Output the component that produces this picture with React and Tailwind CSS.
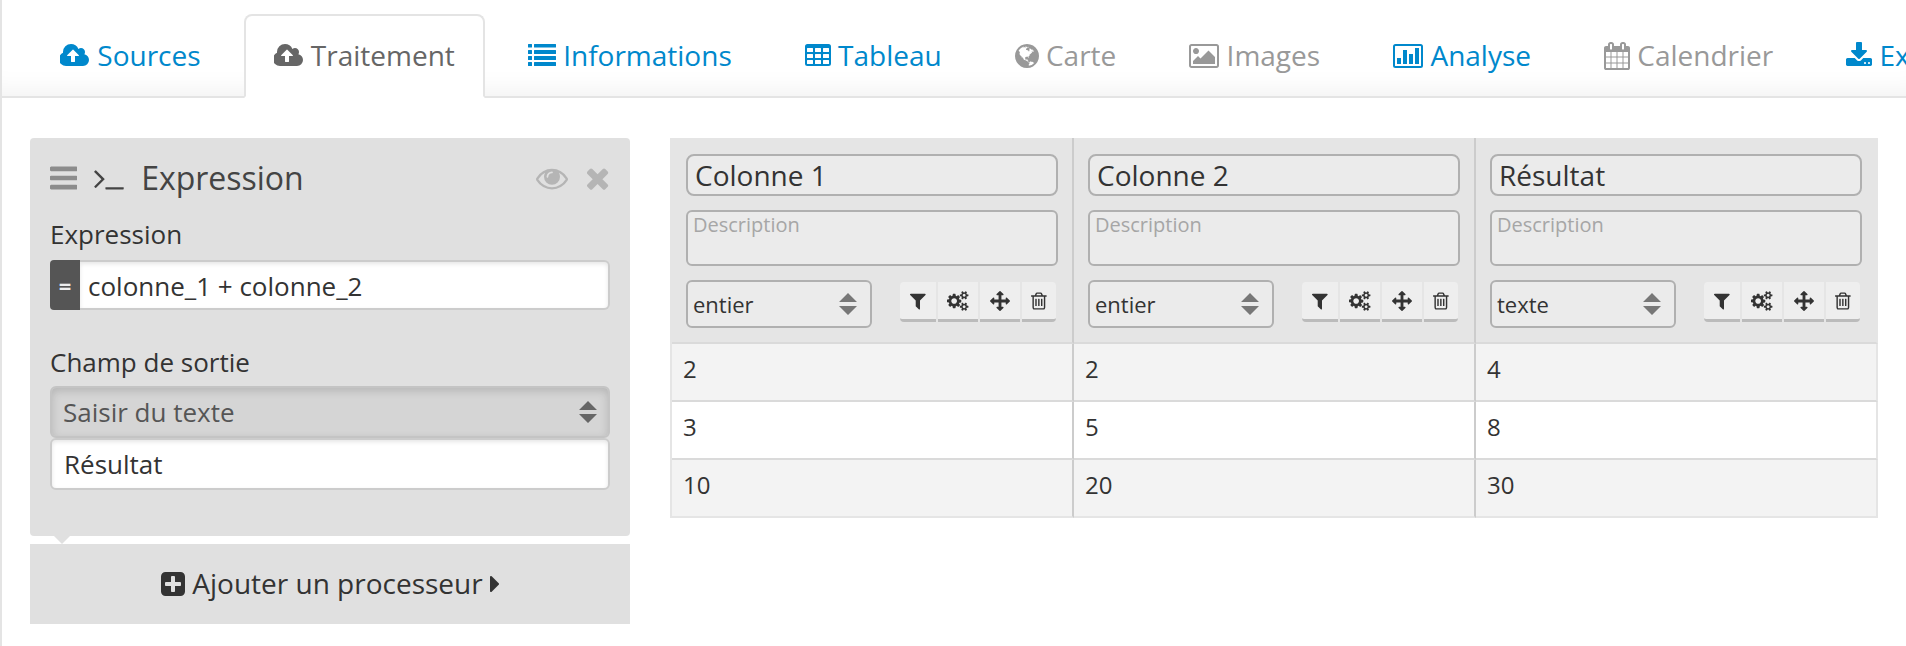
const ICONS = {
  cloudUpload: ['0 0 1920 1792', 'M1216 864q0-14-9-23l-352-352q-9-9-23-9t-23 9l-351 351q-10 12-10 24 0 14 9 23t23 9h224v352q0 13 9.5 22.5t22.5 9.5h192q13 0 22.5-9.5t9.5-22.5v-352h224q13 0 22.5-9.5t9.5-22.5zm640 288q0 159-112.5 271.5t-271.5 112.5h-1088q-185 0-316.5-131.5t-131.5-316.5q0-130 70-240t188-165q-2-30-2-43 0-212 150-362t362-150q156 0 285.5 87t188.5 231q71-62 166-62 106 0 181 75t75 181q0 76-41 138 130 31 213.5 135.5t83.5 238.5z'],
  list: ['0 0 1792 1792', 'M32 128h192q32 0 32 32v160q0 32-32 32h-192q-32 0-32-32v-160q0-32 32-32zM416 128h1344q32 0 32 32v160q0 32-32 32h-1344q-32 0-32-32v-160q0-32 32-32zM32 512h192q32 0 32 32v192q0 32-32 32h-192q-32 0-32-32v-192q0-32 32-32zM416 512h1344q32 0 32 32v192q0 32-32 32h-1344q-32 0-32-32v-192q0-32 32-32zM32 896h192q32 0 32 32v192q0 32-32 32h-192q-32 0-32-32v-192q0-32 32-32zM416 896h1344q32 0 32 32v192q0 32-32 32h-1344q-32 0-32-32v-192q0-32 32-32zM32 1280h192q32 0 32 32v192q0 32-32 32h-192q-32 0-32-32v-192q0-32 32-32zM416 1280h1344q32 0 32 32v192q0 32-32 32h-1344q-32 0-32-32v-192q0-32 32-32z'],
  table: ['0 0 1664 1792', 'M160 128h1344q160 0 160 160v1088q0 160-160 160h-1344q-160 0-160-160v-1088q0-160 160-160zM160 384h320q32 0 32 32v192q0 32-32 32h-320q-32 0-32-32v-192q0-32 32-32zM672 384h320q32 0 32 32v192q0 32-32 32h-320q-32 0-32-32v-192q0-32 32-32zM1184 384h320q32 0 32 32v192q0 32-32 32h-320q-32 0-32-32v-192q0-32 32-32zM160 768h320q32 0 32 32v192q0 32-32 32h-320q-32 0-32-32v-192q0-32 32-32zM672 768h320q32 0 32 32v192q0 32-32 32h-320q-32 0-32-32v-192q0-32 32-32zM1184 768h320q32 0 32 32v192q0 32-32 32h-320q-32 0-32-32v-192q0-32 32-32zM160 1152h320q32 0 32 32v192q0 32-32 32h-320q-32 0-32-32v-192q0-32 32-32zM672 1152h320q32 0 32 32v192q0 32-32 32h-320q-32 0-32-32v-192q0-32 32-32zM1184 1152h320q32 0 32 32v192q0 32-32 32h-320q-32 0-32-32v-192q0-32 32-32z'],
  globe: ['128 0 1536 1792', 'M896 128q209 0 385.5 103t279.5 279.5 103 385.5-103 385.5-279.5 279.5-385.5 103-385.5-103-279.5-279.5-103-385.5 103-385.5 279.5-279.5 385.5-103zm274 521q-2 1-9.5 9.5t-13.5 9.5q2 0 4.5-5t5-11 3.5-7q6-7 22-15 14-6 52-12 34-8 51 11-2-2 9.5-13t14.5-12q3-2 15-4.5t15-7.5l2-22q-12 1-17.5-7t-6.5-21q0 2-6 8 0-7-4.5-8t-11.5 1-9 1q-10-3-15-7.5t-8-16.5-4-15q-2-5-9.5-11t-9.5-10q-1-2-2.5-5.5t-3-6.5-4-5.5-5.5-2.5-7 5-7.5 10-4.5 5q-3-2-6-1.5t-4.5 1-4.5 3-5 3.5q-3 2-8.5 3t-8.5 2q15-5-1-11-10-4-16-3 9-4 7.5-12t-8.5-14h5q-1-4-8.5-8.5t-17.5-8.5-13-6q-8-5-34-9.5t-33-.5q-5 6-4.5 10.5t4 14 3.5 12.5q1 6-5.5 13t-6.5 12q0 7 14 15.5t10 21.5q-3 8-16 16t-16 12q-5 8-1.5 18.5t10.5 16.5q2 2 1.5 4t-3.5 4.5-5.5 4-6.5 3.5l-3 2q-11 5-20.5-6t-13.5-26q-7-25-16-30-23-8-29 1-5-13-41-26-25-9-58-4 6-1 0-15-7-15-19-12 3-6 4-17.5t1-13.5q3-13 12-23 1-1 7-8.5t9.5-13.5.5-6q35 4 50-11 5-5 11.5-17t10.5-17q9-6 14-5.5t14.5 5.5 14.5 5q14 1 15.5-11t-7.5-20q12 1 3-17-4-7-8-9-12-4-27 5-8 4 2 8-1-1-9.5 10.5t-16.5 17.5-16-5q-1-1-5.5-13.5t-9.5-13.5q-8 0-16 15 3-8-11-15t-24-8q19-12-8-27-7-4-20.5-5t-19.5 4q-5 7-5.5 11.5t5 8 10.5 5.5 11.5 4 8.5 3q14 10 8 14-2 1-8.5 3.5t-11.5 4.5-6 4q-3 4 0 14t-2 14q-5-5-9-17.5t-7-16.5q7 9-25 6l-10-1q-4 0-16 2t-20.5 1-13.5-8q-4-8 0-20 1-4 4-2-4-3-11-9.5t-10-8.5q-46 15-94 41 6 1 12-1 5-2 13-6.5t10-5.5q34-14 42-7l5-5q14 16 20 25-7-4-30-1-20 6-22 12 7 12 5 18-4-3-11.5-10t-14.5-11-15-5q-16 0-22 1-146 80-235 222 7 7 12 8 4 1 5 9t2.5 11 11.5-3q9 8 3 19 1-1 44 27 19 17 21 21 3 11-10 18-1-2-9-9t-9-4q-3 5 .5 18.5t10.5 12.5q-7 0-9.5 16t-2.5 35.5-1 23.5l2 1q-3 12 5.5 34.5t21.5 19.5q-13 3 20 43 6 8 8 9 3 2 12 7.5t15 10 10 10.5q4 5 10 22.5t14 23.5q-2 6 9.5 20t10.5 23q-1 0-2.5 1t-2.5 1q3 7 15.5 14t15.5 13q1 3 2 10t3 11 8 2q2-20-24-62-15-25-17-29-3-5-5.5-15.5t-4.5-14.5q2 0 6 1.5t8.5 3.5 7.5 4 2 3q-3 7 2 17.5t12 18.5 17 19 12 13q6 6 14 19.5t0 13.5q9 0 20 10.5t17 19.5q5 8 8 26t5 24q2 7 8.5 13.5t12.5 9.5l16 8 13 7q5 2 18.5 10.5t21.5 11.5q10 4 16 4t14.5-2.5 13.5-3.5q15-2 29 15t21 21q36 19 55 11-2 1 .5 7.5t8 15.5 9 14.5 5.5 8.5q5 6 18 15t18 15q6-4 7-9-3 8 7 20t18 10q14-3 14-32-31 15-49-18 0-1-2.5-5.5t-4-8.5-2.5-8.5 0-7.5 5-3q9 0 10-3.5t-2-12.5-4-13q-1-8-11-20t-12-15q-5 9-16 8t-16-9q0 1-1.5 5.5t-1.5 6.5q-13 0-15-1 1-3 2.5-17.5t3.5-22.5q1-4 5.5-12t7.5-14.5 4-12.5-4.5-9.5-17.5-2.5q-19 1-26 20-1 3-3 10.5t-5 11.5-9 7q-7 3-24 2t-24-5q-13-8-22.5-29t-9.5-37q0-10 2.5-26.5t3-25-5.5-24.5q3-2 9-9.5t10-10.5q2-1 4.5-1.5t4.5 0 4-1.5 3-6q-1-1-4-3-3-3-4-3 7 3 28.5-1.5t27.5 1.5q15 11 22-2 0-1-2.5-9.5t-.5-13.5q5 27 29 9 3 3 15.5 5t17.5 5q3 2 7 5.5t5.5 4.5 5-.5 8.5-6.5q10 14 12 24 11 40 19 44 7 3 11 2t4.5-9.5 0-14-1.5-12.5l-1-8v-18l-1-8q-15-3-18.5-12t1.5-18.5 15-18.5q1-1 8-3.5t15.5-6.5 12.5-8q21-19 15-35 7 0 11-9-1 0-5-3t-7.5-5-4.5-2q9-5 2-16 5-3 7.5-11t7.5-10q9 12 21 2 8-8 1-16 5-7 20.5-10.5t18.5-9.5q7 2 8-2t1-12 3-12q4-5 15-9t13-5l17-11q3-4 0-4 18 2 31-11 10-11-6-20 3-6-3-9.5t-15-5.5q3-1 11.5-.5t10.5-1.5q15-10-7-16-17-5-43 12zm-163 877q206-36 351-189-3-3-12.5-4.5t-12.5-3.5q-18-7-24-8 1-7-2.5-13t-8-9-12.5-8-11-7q-2-2-7-6t-7-5.5-7.5-4.5-8.5-2-10 1l-3 1q-3 1-5.5 2.5t-5.5 3-4 3 0 2.5q-21-17-36-22-5-1-11-5.5t-10.5-7-10-1.5-11.5 7q-5 5-6 15t-2 13q-7-5 0-17.5t2-18.5q-3-6-10.5-4.5t-12 4.5-11.5 8.5-9 6.5-8.5 5.5-8.5 7.5q-3 4-6 12t-5 11q-2-4-11.5-6.5t-9.5-5.5q2 10 4 35t5 38q7 31-12 48-27 25-29 40-4 22 12 26 0 7-8 20.5t-7 21.5q0 6 2 16z'],
  picture: ['-64 0 1920 1792', 'M576 576q0 80-56 136t-136 56-136-56-56-136 56-136 136-56 136 56 56 136zm1024 384v448h-1408v-192l320-320 160 160 512-512zm96-704h-1600q-13 0-22.5 9.5t-9.5 22.5v1216q0 13 9.5 22.5t22.5 9.5h1600q13 0 22.5-9.5t9.5-22.5v-1216q0-13-9.5-22.5t-22.5-9.5zm160 32v1216q0 66-47 113t-113 47h-1600q-66 0-113-47t-47-113v-1216q0-66 47-113t113-47h1600q66 0 113 47t47 113z'],
  barChart: ['0 0 1920 1792', 'M256 1024h256v384h-256zM640 512h256v896h-256zM1024 768h256v640h-256zM1408 384h256v1024h-256zM160 128h1600q160 0 160 160v1216q0 160-160 160h-1600q-160 0-160-160v-1216q0-160 160-160zM160 256q-32 0-32 32v1216q0 32 32 32h1600q32 0 32-32v-1216q0-32-32-32z'],
  calendar: ['64 0 1664 1792', 'M192 1664h288v-288h-288v288zm352 0h320v-288h-320v288zm-352-352h288v-320h-288v320zm352 0h320v-320h-320v320zm-352-384h288v-288h-288v288zm736 736h320v-288h-320v288zm-384-736h320v-288h-320v288zm768 736h288v-288h-288v288zm-384-352h320v-320h-320v320zm-352-864v-288q0-13-9.5-22.5t-22.5-9.5h-64q-13 0-22.5 9.5t-9.5 22.5v288q0 13 9.5 22.5t22.5 9.5h64q13 0 22.5-9.5t9.5-22.5zm736 864h288v-320h-288v320zm-384-384h320v-288h-320v288zm384 0h288v-288h-288v288zm32-480v-288q0-13-9.5-22.5t-22.5-9.5h-64q-13 0-22.5 9.5t-9.5 22.5v288q0 13 9.5 22.5t22.5 9.5h64q13 0 22.5-9.5t9.5-22.5zm384-64v1280q0 52-38 90t-90 38h-1408q-52 0-90-38t-38-90v-1280q0-52 38-90t90-38h128v-96q0-66 47-113t113-47h64q66 0 113 47t47 113v96h384v-96q0-66 47-113t113-47h64q66 0 113 47t47 113v96h128q52 0 90 38t38 90z'],
  download: ['64 0 1664 1792', 'M1344 1344q0-26-19-45t-45-19-45 19-19 45 19 45 45 19 45-19 19-45zm256 0q0-26-19-45t-45-19-45 19-19 45 19 45 45 19 45-19 19-45zm128-224v320q0 40-28 68t-68 28h-1472q-40 0-68-28t-28-68v-320q0-40 28-68t68-28h465l135 136q58 56 136 56t136-56l136-136h464q40 0 68 28t28 68zm-325-569q17 41-14 70l-448 448q-18 19-45 19t-45-19l-448-448q-31-29-14-70 17-39 59-39h256v-448q0-26 19-45t45-19h256q26 0 45 19t19 45v448h256q42 0 59 39z'],
  bars: ['128 0 1536 1792', 'M1664 1344v128q0 26-19 45t-45 19h-1408q-26 0-45-19t-19-45v-128q0-26 19-45t45-19h1408q26 0 45 19t19 45zm0-512v128q0 26-19 45t-45 19h-1408q-26 0-45-19t-19-45v-128q0-26 19-45t45-19h1408q26 0 45 19t19 45zm0-512v128q0 26-19 45t-45 19h-1408q-26 0-45-19t-19-45v-128q0-26 19-45t45-19h1408q26 0 45 19t19 45z'],
  terminal: ['64 0 1664 1792', 'M649 983l-466 466q-10 10-23 10t-23-10l-50-50q-10-10-10-23t10-23l393-393-393-393q-10-10-10-23t10-23l50-50q10-10 23-10t23 10l466 466q10 10 10 23t-10 23zm1079 457v64q0 14-9 23t-23 9h-960q-14 0-23-9t-9-23v-64q0-14 9-23t23-9h960q14 0 23 9t9 23z'],
  eye: ['0 0 1792 1792', 'M1664 960q-152-236-381-353 61 104 61 225 0 185-131.5 316.5t-316.5 131.5-316.5-131.5-131.5-316.5q0-121 61-225-229 117-381 353 133 205 333.5 326.5t434.5 121.5 434.5-121.5 333.5-326.5zm-720-384q0-20-14-34t-34-14q-125 0-214.5 89.5t-89.5 214.5q0 20 14 34t34 14 34-14 14-34q0-86 61-147t147-61q20 0 34-14t14-34zm848 384q0 34-20 69-140 230-376.5 368.5t-499.5 138.5-499.5-139-376.5-368q-20-35-20-69t20-69q140-229 376.5-368t499.5-139 499.5 139 376.5 368q20 35 20 69z'],
  times: ['192 0 1408 1792', 'M1490 1322q0 40-28 68l-136 136q-28 28-68 28t-68-28l-294-294-294 294q-28 28-68 28t-68-28l-136-136q-28-28-28-68t28-68l294-294-294-294q-28-28-28-68t28-68l136-136q28-28 68-28t68 28l294 294 294-294q28-28 68-28t68 28l136 136q28 28 28 68t-28 68l-294 294 294 294q28 28 28 68z'],
  filter: ['192 0 1408 1792', 'M1595 295q17 41-14 70l-493 493v742q0 42-39 59-13 5-25 5-27 0-45-19l-256-256q-19-19-19-45v-486l-493-493q-31-29-14-70 17-39 59-39h1280q42 0 59 39z'],
  cogs: ['-64 0 1920 1792', 'M832 896q0-106-75-181t-181-75-181 75-75 181 75 181 181 75 181-75 75-181zm768 512q0-52-38-90t-90-38-90 38-38 90q0 53 37.5 90.5t90.5 37.5 90.5-37.5 37.5-90.5zm0-1024q0-52-38-90t-90-38-90 38-38 90q0 53 37.5 90.5t90.5 37.5 90.5-37.5 37.5-90.5zm-384 421v185q0 10-7 19.5t-16 10.5l-155 24q-11 35-32 76 34 48 90 115 7 11 7 20 0 12-7 19-23 30-82.5 89.5t-78.5 59.5q-11 0-21-7l-115-90q-37 19-77 31-11 108-23 155-7 24-30 24h-186q-11 0-20-7.5t-10-17.5l-23-153q-34-10-75-31l-118 89q-7 7-20 7-11 0-21-8-144-133-144-160 0-9 7-19 10-14 41-53t47-61q-23-44-35-82l-152-24q-10-1-17-9.5t-7-19.5v-185q0-10 7-19.5t16-10.5l155-24q11-35 32-76-34-48-90-115-7-11-7-20 0-12 7-20 22-30 82-89t79-59q11 0 21 7l115 90q34-18 77-32 11-108 23-154 7-24 30-24h186q11 0 20 7.5t10 17.5l23 153q34 10 75 31l118-89q8-7 20-7 11 0 21 8 144 133 144 160 0 8-7 19-12 16-42 54t-45 60q23 48 34 82l152 23q10 2 17 10.5t7 19.5zm640 533v140q0 16-149 31-12 27-30 52 51 113 51 138 0 4-4 7-122 71-124 71-8 0-46-47t-52-68q-20 2-30 2t-30-2q-14 21-52 68t-46 47q-2 0-124-71-4-3-4-7 0-25 51-138-18-25-30-52-149-15-149-31v-140q0-16 149-31 13-29 30-52-51-113-51-138 0-4 4-7 4-2 35-20t59-34 30-16q8 0 46 46.5t52 67.5q20-2 30-2t30 2q51-71 92-112l6-2q4 0 124 70 4 3 4 7 0 25-51 138 17 23 30 52 149 15 149 31zm0-1024v140q0 16-149 31-12 27-30 52 51 113 51 138 0 4-4 7-122 71-124 71-8 0-46-47t-52-68q-20 2-30 2t-30-2q-14 21-52 68t-46 47q-2 0-124-71-4-3-4-7 0-25 51-138-18-25-30-52-149-15-149-31v-140q0-16 149-31 13-29 30-52-51-113-51-138 0-4 4-7 4-2 35-20t59-34 30-16q8 0 46 46.5t52 67.5q20-2 30-2t30 2q51-71 92-112l6-2q4 0 124 70 4 3 4 7 0 25-51 138 17 23 30 52 149 15 149 31z'],
  move: ['0 0 1792 1792', 'M1792 896q0 26-19 45l-256 256q-19 19-45 19t-45-19-19-45v-128h-384v384h128q26 0 45 19t19 45-19 45l-256 256q-19 19-45 19t-45-19l-256-256q-19-19-19-45t19-45 45-19h128v-384h-384v128q0 26-19 45t-45 19-45-19l-256-256q-19-19-19-45t19-45l256-256q19-19 45-19t45 19 19 45v128h384v-384h-128q-26 0-45-19t-19-45 19-45l256-256q19-19 45-19t45 19l256 256q19 19 19 45t-19 45-45 19h-128v384h384v-128q0-26 19-45t45-19 45 19l256 256q19 19 19 45z'],
  trash: ['192 0 1408 1792', 'M704 736v576q0 14-9 23t-23 9h-64q-14 0-23-9t-9-23v-576q0-14 9-23t23-9h64q14 0 23 9t9 23zm256 0v576q0 14-9 23t-23 9h-64q-14 0-23-9t-9-23v-576q0-14 9-23t23-9h64q14 0 23 9t9 23zm256 0v576q0 14-9 23t-23 9h-64q-14 0-23-9t-9-23v-576q0-14 9-23t23-9h64q14 0 23 9t9 23zm128 724v-948h-896v948q0 22 7 40.5t14.5 27 10.5 8.5h832q3 0 10.5-8.5t14.5-27 7-40.5zm-672-1076h448l-48-117q-7-9-17-11h-317q-10 2-17 11zm928 32v64q0 14-9 23t-23 9h-96v948q0 83-47 143.5t-113 60.5h-832q-66 0-113-58.5t-47-141.5v-952h-96q-14 0-23-9t-9-23v-64q0-14 9-23t23-9h309l70-167q15-37 54-63t79-26h320q40 0 79 26t54 63l70 167h309q14 0 23 9t9 23z'],
  plusSquare: ['128 0 1536 1792', 'M1408 960v-128q0-26-19-45t-45-19h-320v-320q0-26-19-45t-45-19h-128q-26 0-45 19t-19 45v320h-320q-26 0-45 19t-19 45v128q0 26 19 45t45 19h320v320q0 26 19 45t45 19h128q26 0 45-19t19-45v-320h320q26 0 45-19t19-45zm256-544v960q0 119-84.5 203.5t-203.5 84.5h-960q-119 0-203.5-84.5t-84.5-203.5v-960q0-119 84.5-203.5t203.5-84.5h960q119 0 203.5 84.5t84.5 203.5z'],
  caretRight: ['576 0 576 1792', 'M1152 896q0 26-19 45l-448 448q-19 19-45 19t-45-19-19-45v-896q0-26 19-45t45-19 45 19l448 448q19 19 19 45z'],
};

function Icon({ name, className }) {
  const [viewBox, d] = ICONS[name];
  return (
    <svg viewBox={viewBox} fill="currentColor" fillRule="evenodd" aria-hidden="true" className={className}>
      <path d={d} />
    </svg>
  );
}

const TABS = [
  { label: 'Sources', icon: 'cloudUpload', state: 'enabled' },
  { label: 'Traitement', icon: 'cloudUpload', state: 'active' },
  { label: 'Informations', icon: 'list', state: 'enabled' },
  { label: 'Tableau', icon: 'table', state: 'enabled' },
  { label: 'Carte', icon: 'globe', state: 'disabled' },
  { label: 'Images', icon: 'picture', state: 'disabled' },
  { label: 'Analyse', icon: 'barChart', state: 'enabled' },
  { label: 'Calendrier', icon: 'calendar', state: 'disabled' },
  { label: 'Export', icon: 'download', state: 'enabled' },
];

const TAB_STYLES = {
  enabled: 'border-transparent text-[#0088cc]',
  active: 'border-[#e4e4e4] border-b-white bg-white text-[#666666]',
  disabled: 'border-transparent text-[#999999]',
};

const COLUMNS = [
  { name: 'Colonne 1', type: 'entier' },
  { name: 'Colonne 2', type: 'entier' },
  { name: 'Résultat', type: 'texte' },
];

const ROWS = [
  [2, 2, 4],
  [3, 5, 8],
  [10, 20, 30],
];

const ACTIONS = [
  { icon: 'filter', label: 'Filtrer', width: 'w-9 rounded-l-sm' },
  { icon: 'cogs', label: 'Transformer', width: 'w-10' },
  { icon: 'move', label: 'Déplacer', width: 'w-10' },
  { icon: 'trash', label: 'Supprimer', width: 'w-[34px] rounded-r-sm' },
];

function Tabs() {
  return (
    <div className="overflow-hidden">
      <nav className="flex gap-[13px] border-b-2 border-[#e4e4e4] pt-[14px] pl-7 shadow-[inset_0_-30px_30px_-30px_rgba(0,0,0,0.08)]">
        {TABS.map((tab) => (
          <a
            key={tab.label}
            href="#"
            aria-current={tab.state === 'active' ? 'page' : undefined}
            aria-disabled={tab.state === 'disabled' ? true : undefined}
            className={`-mb-[2px] shrink-0 rounded-t-lg border-2 px-7 pt-[19px] pb-[21px] text-[28px] leading-10 whitespace-nowrap ${TAB_STYLES[tab.state]}`}
          >
            <Icon name={tab.icon} className="inline-block h-7 w-auto align-[-4px]" /> {tab.label}
          </a>
        ))}
      </nav>
    </div>
  );
}

function SortArrows({ className }) {
  return (
    <svg viewBox="0 0 18 22" aria-hidden="true" className={`pointer-events-none absolute top-1/2 h-[22px] w-[18px] -translate-y-1/2 ${className}`}>
      <path d="M9 0l9 9H0zM0 13h18l-9 9z" fill="currentColor" />
    </svg>
  );
}

function Processor() {
  return (
    <section className="w-[600px] shrink-0">
      <div className="rounded bg-[#e0e0e0] px-5 pt-5 pb-[46px] text-[26px]">
        <div className="flex items-center gap-[17px] pb-[18px]">
          <Icon name="bars" className="h-8 w-auto text-[#8c8c8c]" />
          <Icon name="terminal" className="h-8 w-auto text-[#444444]" />
          <h2 className="grow text-[32px] leading-10 text-[#444444]">Expression</h2>
          <button type="button" aria-label="Aperçu" className="text-[#b5b5b5]">
            <Icon name="eye" className="h-8 w-auto" />
          </button>
          <button type="button" aria-label="Supprimer" className="text-[#b5b5b5]">
            <Icon name="times" className="h-8 w-auto" />
          </button>
        </div>

        <label htmlFor="expression" className="mb-2 block leading-9">Expression</label>
        <div className="flex">
          <span className="flex w-[30px] items-center justify-center rounded-l bg-[#555555] text-[22px] font-bold text-[#eeeeee]">=</span>
          <input
            id="expression"
            type="text"
            defaultValue="colonne_1 + colonne_2"
            className="h-[50px] min-w-0 grow rounded-r-md border-2 border-l-0 border-[#cccccc] bg-white px-2 pt-[2px] shadow-[inset_0_2px_4px_rgba(0,0,0,0.1)] outline-none"
          />
        </div>

        <label htmlFor="output" className="mt-[34px] mb-[6px] block leading-9">Champ de sortie</label>
        <div className="relative">
          <select
            id="output"
            className="block h-[52px] w-full appearance-none rounded-md border-2 border-[#c4c4c4] bg-[#d5d5d5] pl-[11px] text-[#555555] shadow-[inset_0_3px_8px_rgba(0,0,0,0.15)] outline-none"
          >
            <option>Saisir du texte</option>
          </select>
          <SortArrows className="right-[13px] text-[#666666]" />
        </div>
        <input
          type="text"
          aria-label="Nom du champ de sortie"
          defaultValue="Résultat"
          className="block h-[52px] w-full rounded-md border-2 border-[#cccccc] bg-white px-3 shadow-[inset_0_2px_4px_rgba(0,0,0,0.1)] outline-none"
        />
      </div>

      <svg viewBox="0 0 16 8" aria-hidden="true" className="ml-6 block h-2 w-4">
        <path d="M0 0h16L8 8z" fill="#e0e0e0" />
      </svg>

      <button type="button" className="h-20 w-full bg-[#e0e0e0] pb-[2px] text-[28px]">
        <Icon name="plusSquare" className="inline-block h-7 w-auto align-[-4px]" /> Ajouter un processeur <Icon name="caretRight" className="inline-block h-7 w-auto align-[-4px]" />
      </button>
    </section>
  );
}

function ColumnHeader({ column }) {
  return (
    <div className="flex flex-col gap-[14px] px-[14px] pt-4 pb-[14px]">
      <input
        type="text"
        aria-label="Nom de la colonne"
        defaultValue={column.name}
        className="h-[42px] w-full rounded-lg border-2 border-[#b0b0b0] bg-[#ebebeb] px-[7px] text-[28px] outline-none"
      />
      <textarea
        aria-label="Description"
        placeholder="Description"
        className="block h-14 w-full resize-none rounded-md border-2 border-[#b0b0b0] bg-[#ebebeb] px-[5px] text-[20px] leading-[26px] outline-none placeholder:text-[#a6a6a6]"
      />
      <div className="flex justify-between">
        <div className="relative w-[186px]">
          <select
            aria-label="Type de la colonne"
            defaultValue={column.type}
            className="block h-12 w-full appearance-none rounded-md border-2 border-[#b0b0b0] bg-[#ebebeb] pl-[5px] text-[22px] outline-none"
          >
            <option>entier</option>
            <option>texte</option>
          </select>
          <SortArrows className="right-[15px] text-[#777777]" />
        </div>
        <div className="flex gap-[2px] pt-[2px] pr-[2px]">
          {ACTIONS.map((action) => (
            <button
              key={action.icon}
              type="button"
              aria-label={action.label}
              className={`flex h-10 items-center justify-center border-b-[3px] border-[#bbbbbb] bg-[#eeeeee] ${action.width}`}
            >
              <Icon name={action.icon} className="h-5 w-auto" />
            </button>
          ))}
        </div>
      </div>
    </div>
  );
}

function DataTable() {
  return (
    <div className="min-w-0 grow border-l-2 border-[#e5e5e5]">
      <table className="w-full table-fixed border-separate border-spacing-0 text-left text-[24px]">
        <thead>
          <tr>
            {COLUMNS.map((column) => (
              <th key={column.name} className="border-r-2 border-b-2 border-r-[#cccccc] border-b-[#dadada] bg-[#e5e5e5] p-0 font-normal last:border-r-[#e5e5e5]">
                <ColumnHeader column={column} />
              </th>
            ))}
          </tr>
        </thead>
        <tbody>
          {ROWS.map((row) => (
            <tr key={row[0]} className="group odd:bg-[#f3f3f3] even:bg-white">
              {row.map((value, i) => (
                <td key={i} className="border-r-2 border-b-2 border-r-[#cccccc] border-b-[#dadada] px-[11px] pt-[9px] pb-[15px] leading-8 group-last:border-b-[#e5e5e5] last:border-r-[#e5e5e5]">
                  {value}
                </td>
              ))}
            </tr>
          ))}
        </tbody>
      </table>
    </div>
  );
}

export default function App() {
  return (
    <div className="min-h-screen border-l-2 border-[#e4e4e4] bg-white font-['Open_Sans','Noto_Sans',sans-serif] text-[#333333]">
      <Tabs />
      <main className="flex items-start gap-10 px-7 pt-10">
        <Processor />
        <DataTable />
      </main>
    </div>
  );
}
